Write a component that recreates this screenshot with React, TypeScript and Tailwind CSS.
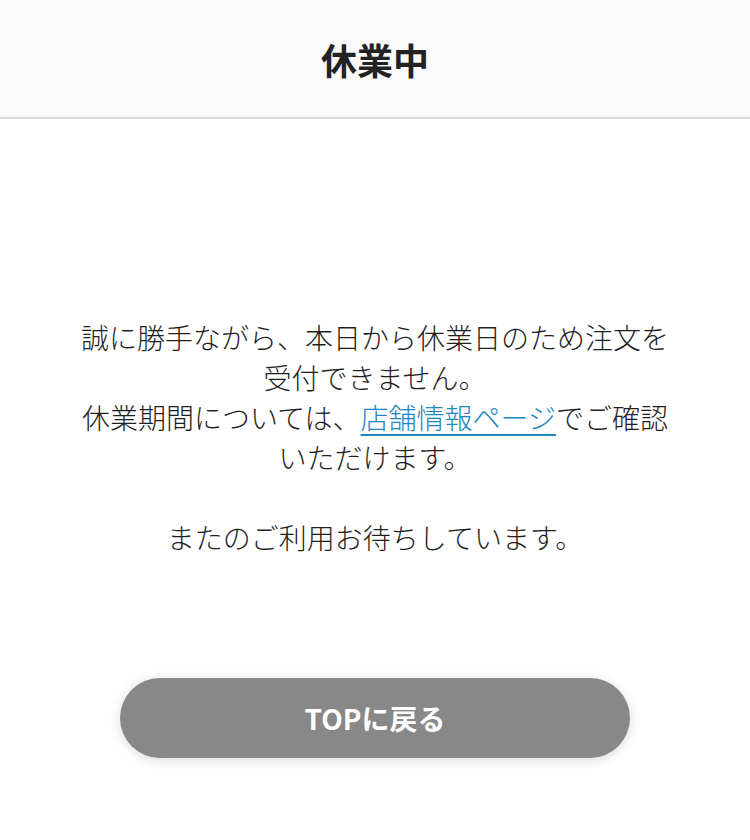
export default function App() {
  return (
    <div
      className="min-h-[840px] bg-white text-[#333]"
      style={{ fontFamily: '"Noto Sans CJK JP", "Noto Sans", sans-serif' }}
    >
      <header className="flex h-[119px] items-center justify-center border-b-2 border-[#dddddd] bg-[#fafafa]">
        <h1 className="text-[36px] font-bold leading-none text-[#222]">休業中</h1>
      </header>

      <main className="flex flex-col items-center px-6 pt-[198px]">
        <p className="text-center text-[28px] font-light leading-[40px] text-[#1f1f1f]">
          誠に勝手ながら、本日から休業日のため注文を
          <br />
          受付できません。
          <br />
          休業期間については、
          <a href="#" className="text-[#1f86bd] underline decoration-2 underline-offset-[5px]">
            店舗情報ページ
          </a>
          でご確認
          <br />
          いただけます。
          <br />
          <br />
          またのご利用お待ちしています。
        </p>

        <button className="mt-[121px] flex h-[80px] w-[510px] items-center justify-center rounded-full bg-[#888888] text-[28px] font-bold text-white shadow-[0_2px_12px_rgba(0,0,0,0.15)]">
          TOPに戻る
        </button>
      </main>
    </div>
  );
}
